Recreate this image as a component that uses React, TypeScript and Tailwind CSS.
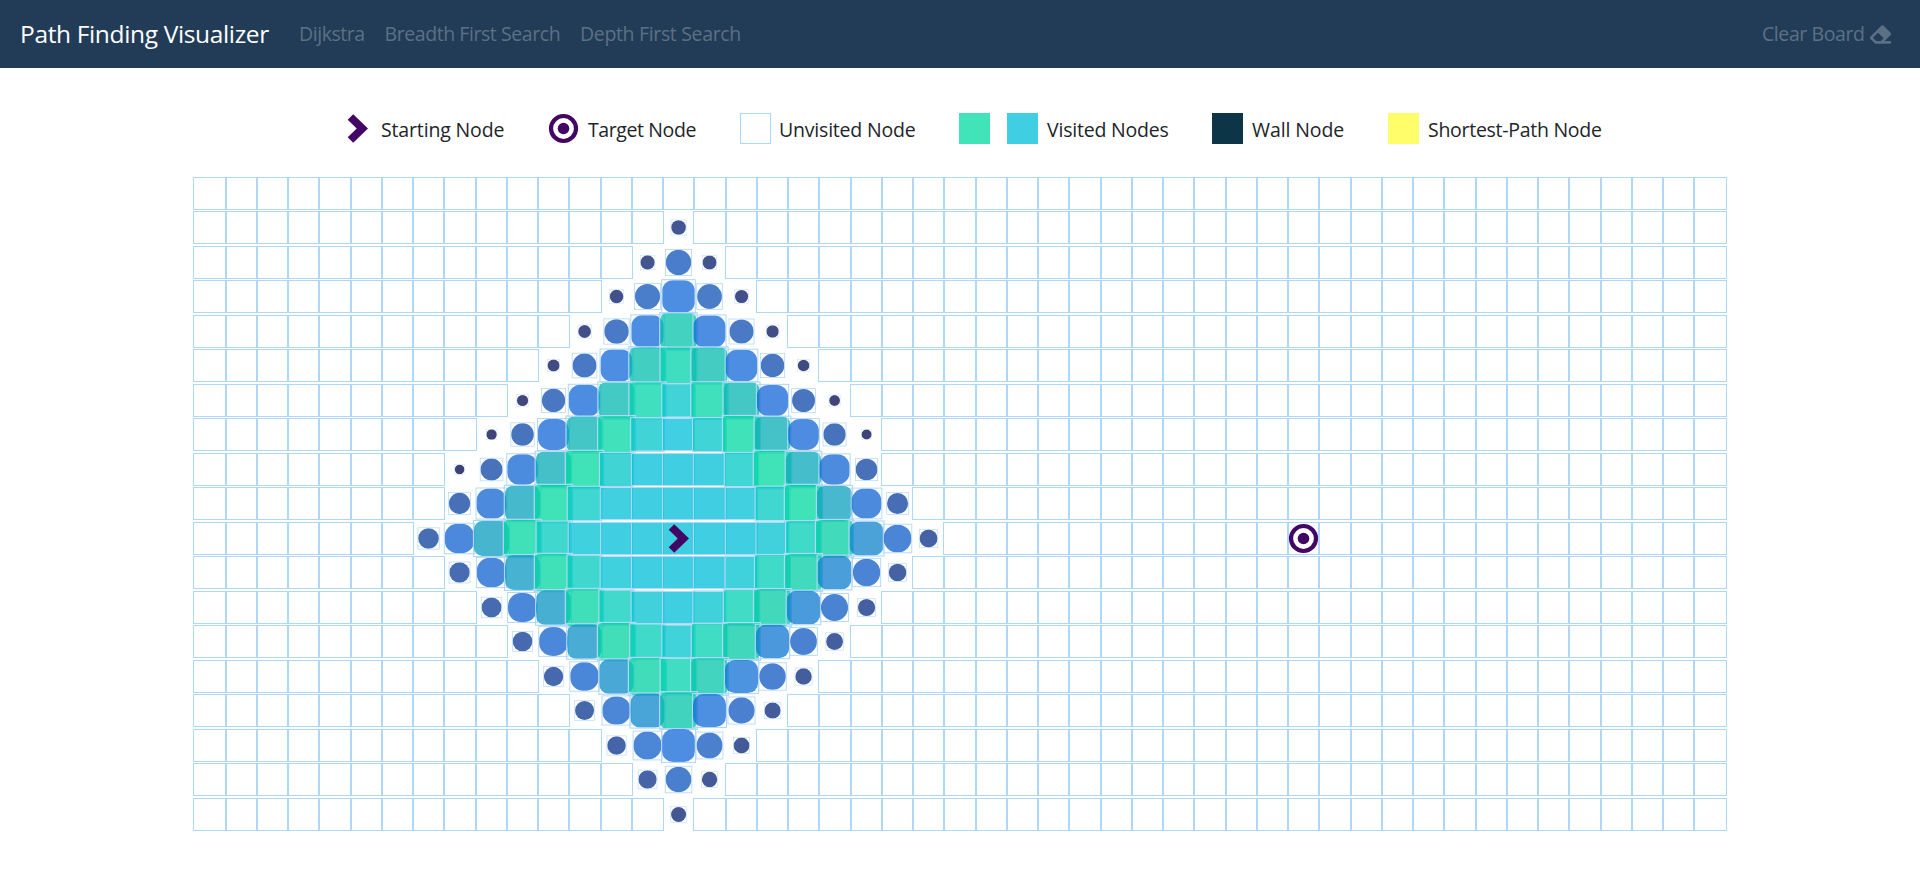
import type { ReactNode } from "react";
import { FaEraser } from "react-icons/fa";

const ROWS = 19;
const COLS = 49;
const START = { row: 10, col: 15 };
const TARGET = { row: 10, col: 35 };
const VISITED = 159;
const STEP_MS = 10;
const DURATION_MS = 1500;
const ELAPSED_MS = (VISITED - 1) * STEP_MS + 6;

const key = (row: number, col: number) => row * COLS + col;

function visitOrder(): Map<number, number> {
  const order = new Map<number, number>();
  const seen = new Set<number>([key(START.row, START.col)]);
  const queue = [START];
  while (queue.length > 0 && order.size < VISITED) {
    const { row, col } = queue.shift()!;
    order.set(key(row, col), order.size);
    const neighbours = [
      { row: row - 1, col },
      { row, col: col - 1 },
      { row, col: col + 1 },
      { row: row + 1, col },
    ];
    for (const n of neighbours) {
      const inside = n.row >= 0 && n.row < ROWS && n.col >= 0 && n.col < COLS;
      if (inside && !seen.has(key(n.row, n.col))) {
        seen.add(key(n.row, n.col));
        queue.push(n);
      }
    }
  }
  return order;
}

// cubic-bezier(0, 0, 0.58, 1)
function easeOut(x: number): number {
  if (x <= 0) return 0;
  if (x >= 1) return 1;
  let lo = 0;
  let hi = 1;
  for (let i = 0; i < 30; i++) {
    const s = (lo + hi) / 2;
    if (3 * 0.58 * s * s * (1 - s) + s * s * s < x) lo = s;
    else hi = s;
  }
  return 3 * lo * lo * (1 - lo) + lo * lo * lo;
}

function track(stops: [number, number][], t: number): number {
  for (let i = 1; i < stops.length; i++) {
    const [t0, v0] = stops[i - 1];
    const [t1, v1] = stops[i];
    if (t <= t1) return v0 + (v1 - v0) * easeOut((t - t0) / (t1 - t0));
  }
  return stops[stops.length - 1][1];
}

function visitedStyle(index: number) {
  const t = Math.min(1, (ELAPSED_MS - index * STEP_MS) / DURATION_MS);
  const scale = track([[0, 0.3], [0.75, 1.2], [1, 1]], t);
  const r = track([[0, 0], [0.5, 17], [0.75, 0], [1, 0]], t);
  const g = track([[0, 0], [0.5, 104], [0.75, 217], [1, 190]], t);
  const b = track([[0, 66], [0.5, 217], [0.75, 159], [1, 218]], t);
  const radius = track([[0, 100], [1, 0]], t);
  return {
    frame: { transform: `scale(${scale.toFixed(4)})` },
    fill: {
      backgroundColor: `rgba(${r.toFixed(0)}, ${g.toFixed(0)}, ${b.toFixed(0)}, 0.75)`,
      borderRadius: `${radius.toFixed(2)}%`,
    },
  };
}

const ORDER = visitOrder();

function StartIcon() {
  return (
    <svg viewBox="0 0 31 31" className="block size-[31px] shrink-0" fill="#420664">
      <path d="M11.2 1.3 L5.7 6.7 L14.7 15.5 L5.7 24.3 L11.2 29.7 L26 15.5 Z" />
    </svg>
  );
}

function TargetIcon() {
  return (
    <svg viewBox="0 0 31 31" className="block size-[31px] shrink-0">
      <circle cx="15.5" cy="15.5" r="12.5" fill="none" stroke="#420664" strokeWidth="4.2" />
      <circle cx="15.5" cy="15.5" r="5.8" fill="#420664" />
    </svg>
  );
}

function Cell({ row, col }: { row: number; col: number }) {
  const index = ORDER.get(key(row, col));
  const visited = index === undefined ? undefined : visitedStyle(index);
  let icon: ReactNode = null;
  if (row === START.row && col === START.col) icon = <StartIcon />;
  if (row === TARGET.row && col === TARGET.col) icon = <TargetIcon />;
  return (
    <div
      className="h-[31px] w-[31.25px] shrink-0 outline outline-1 outline-[#afd8f8]"
      style={visited?.frame}
    >
      {visited ? (
        <div className="size-full" style={visited.fill}>
          {icon}
        </div>
      ) : (
        icon
      )}
    </div>
  );
}

function Swatch({ className }: { className: string }) {
  return <span className={`h-[31px] w-[31px] shrink-0 ${className}`} />;
}

export default function App() {
  return (
    <div className="h-[876px] w-[1920px] overflow-hidden bg-white font-['Open_Sans',sans-serif] text-[19.5px] text-[#212529]">
      <nav className="flex h-[68px] items-center bg-[#223c57] pr-[29px] pl-[20px] whitespace-nowrap text-[#5c7085]">
        <span className="w-[279px] pt-px text-[24.5px] tracking-[-0.35px] text-white">Path Finding Visualizer</span>
        <span className="w-[85.5px] tracking-[-0.45px]">Dijkstra</span>
        <span className="w-[195.5px] tracking-[-0.43px]">Breadth First Search</span>
        <span className="tracking-[-0.34px]">Depth First Search</span>
        <span className="ml-auto w-[108px] tracking-[-0.42px]">Clear Board</span>
        <FaEraser className="size-[21px]" />
      </nav>

      <div className="flex h-[110px] items-start pt-[45px] pl-[342px] leading-[34px] whitespace-nowrap">
        <div className="flex w-[206px] gap-[8px]">
          <StartIcon />
          <span className="tracking-[-0.15px]">Starting Node</span>
        </div>
        <div className="flex w-[192px] gap-[9px]">
          <TargetIcon />
          <span className="tracking-[-0.4px]">Target Node</span>
        </div>
        <div className="flex w-[219px] gap-[8px]">
          <Swatch className="border border-[#afd8f8]" />
          <span className="tracking-[-0.2px]">Unvisited Node</span>
        </div>
        <div className="flex w-[253px]">
          <Swatch className="mr-[17px] bg-[#40e4b8]" />
          <Swatch className="mr-[9px] bg-[#40cee3]" />
          <span className="tracking-[-0.2px]">Visited Nodes</span>
        </div>
        <div className="flex w-[176px] gap-[9px]">
          <Swatch className="bg-[#0c3547]" />
          <span className="tracking-[-0.1px]">Wall Node</span>
        </div>
        <div className="flex gap-[9px]">
          <Swatch className="bg-[#fffe6a]" />
          <span className="tracking-[-0.28px]">Shortest-Path Node</span>
        </div>
      </div>

      <div className="flex flex-col pl-[194.375px]">
        {Array.from({ length: ROWS }, (_, row) => (
          <div key={row} className={`flex items-start ${row % 2 === 0 ? "h-[34px]" : "h-[35px]"}`}>
            {Array.from({ length: COLS }, (_, col) => (
              <Cell key={col} row={row} col={col} />
            ))}
          </div>
        ))}
      </div>
    </div>
  );
}
